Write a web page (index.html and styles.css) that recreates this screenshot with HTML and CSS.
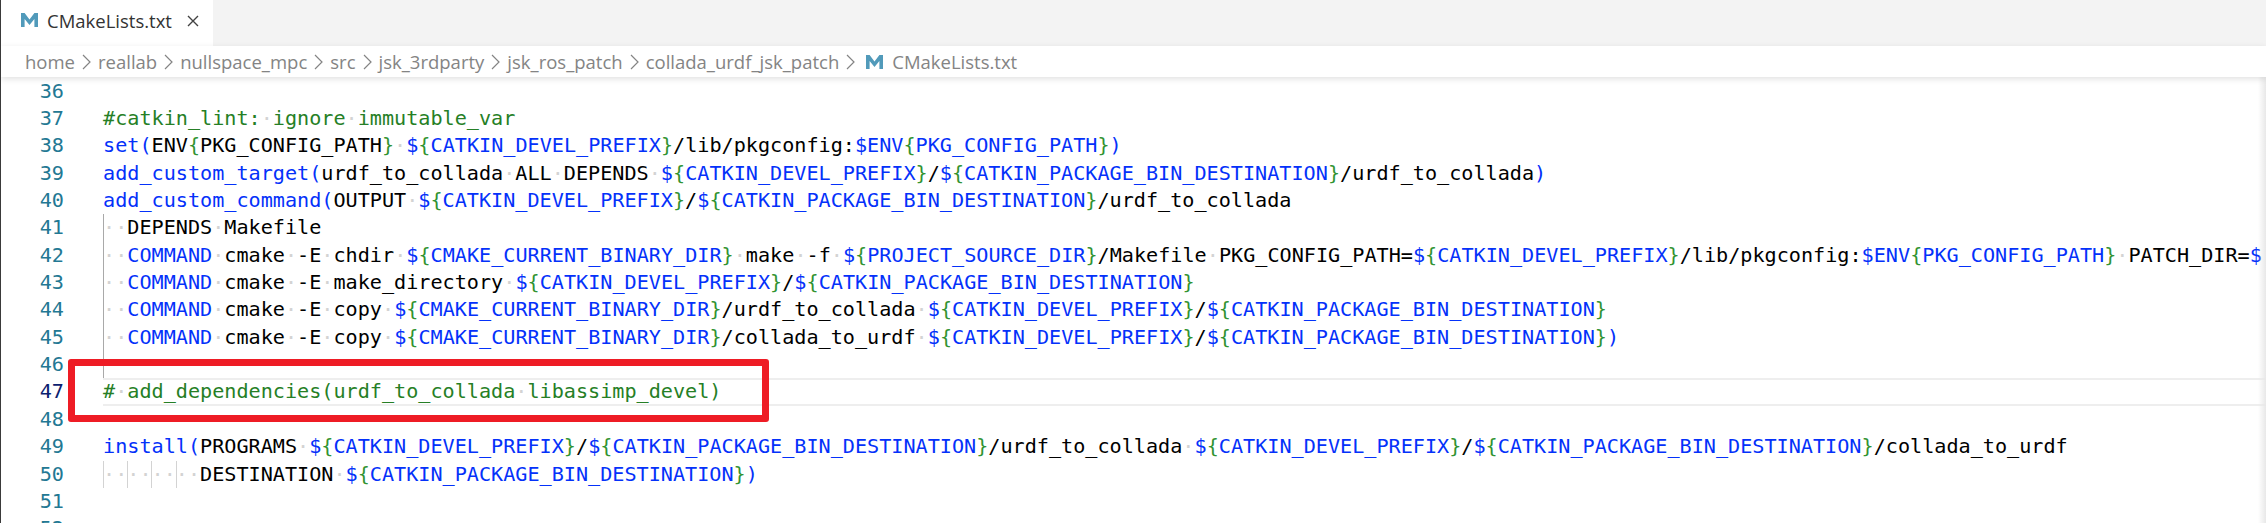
FILE: index.html
```html
<!DOCTYPE html>
<html lang="en">
<head>
<meta charset="utf-8">
<title>CMakeLists.txt</title>
<link rel="stylesheet" href="styles.css">
</head>
<body>
<div class="window">
  <div class="tabs">
    <div class="tab">
      <svg class="m-icon" viewBox="0 0 17 14"><path d="M0 14V0h3.6L8.5 6.6 13.4 0H17v14h-3.6V6L8.5 12 3.6 6V14z"/></svg>
      <span class="tab-name">CMakeLists.txt</span>
      <svg class="close" viewBox="0 0 12 12"><path d="M1 1l10 10M11 1L1 11"/></svg>
    </div>
  </div>
  <div class="crumbs">
    <span>home</span><svg class="chev" viewBox="0 0 9 16"><path d="M1 1l7 7-7 7"/></svg>
    <span>reallab</span><svg class="chev" viewBox="0 0 9 16"><path d="M1 1l7 7-7 7"/></svg>
    <span>nullspace_mpc</span><svg class="chev" viewBox="0 0 9 16"><path d="M1 1l7 7-7 7"/></svg>
    <span>src</span><svg class="chev" viewBox="0 0 9 16"><path d="M1 1l7 7-7 7"/></svg>
    <span>jsk_3rdparty</span><svg class="chev" viewBox="0 0 9 16"><path d="M1 1l7 7-7 7"/></svg>
    <span>jsk_ros_patch</span><svg class="chev" viewBox="0 0 9 16"><path d="M1 1l7 7-7 7"/></svg>
    <span>collada_urdf_jsk_patch</span><svg class="chev" viewBox="0 0 9 16"><path d="M1 1l7 7-7 7"/></svg>
    <svg class="m-icon" viewBox="0 0 17 14"><path d="M0 14V0h3.6L8.5 6.6 13.4 0H17v14h-3.6V6L8.5 12 3.6 6V14z"/></svg>
    <span>CMakeLists.txt</span>
  </div>
  <div class="editor">
    <div class="line"><span class="num">36</span><code class="code"></code></div>
    <div class="line"><span class="num">37</span><code class="code"><i class="c">#catkin_lint:<u>·</u>ignore<u>·</u>immutable_var</i></code></div>
    <div class="line"><span class="num">38</span><code class="code"><b>set(</b>ENV<s>{</s>PKG_CONFIG_PATH<s>}</s><u>·</u><b>$</b><s>{</s><b>CATKIN_DEVEL_PREFIX</b><s>}</s>/lib/pkgconfig:<b>$ENV</b><s>{</s><b>PKG_CONFIG_PATH</b><s>}</s><b>)</b></code></div>
    <div class="line"><span class="num">39</span><code class="code"><b>add_custom_target(</b>urdf_to_collada<u>·</u>ALL<u>·</u>DEPENDS<u>·</u><b>$</b><s>{</s><b>CATKIN_DEVEL_PREFIX</b><s>}</s>/<b>$</b><s>{</s><b>CATKIN_PACKAGE_BIN_DESTINATION</b><s>}</s>/urdf_to_collada<b>)</b></code></div>
    <div class="line"><span class="num">40</span><code class="code"><b>add_custom_command(</b>OUTPUT<u>·</u><b>$</b><s>{</s><b>CATKIN_DEVEL_PREFIX</b><s>}</s>/<b>$</b><s>{</s><b>CATKIN_PACKAGE_BIN_DESTINATION</b><s>}</s>/urdf_to_collada</code></div>
    <div class="line"><span class="num">41</span><code class="code guide"><u>··</u>DEPENDS<u>·</u>Makefile</code></div>
    <div class="line"><span class="num">42</span><code class="code guide"><u>··</u><b>COMMAND</b><u>·</u>cmake<u>·</u>-E<u>·</u>chdir<u>·</u><b>$</b><s>{</s><b>CMAKE_CURRENT_BINARY_DIR</b><s>}</s><u>·</u>make<u>·</u>-f<u>·</u><b>$</b><s>{</s><b>PROJECT_SOURCE_DIR</b><s>}</s>/Makefile<u>·</u>PKG_CONFIG_PATH=<b>$</b><s>{</s><b>CATKIN_DEVEL_PREFIX</b><s>}</s>/lib/pkgconfig:<b>$ENV</b><s>{</s><b>PKG_CONFIG_PATH</b><s>}</s><u>·</u>PATCH_DIR=<b>$</b></code></div>
    <div class="line"><span class="num">43</span><code class="code guide"><u>··</u><b>COMMAND</b><u>·</u>cmake<u>·</u>-E<u>·</u>make_directory<u>·</u><b>$</b><s>{</s><b>CATKIN_DEVEL_PREFIX</b><s>}</s>/<b>$</b><s>{</s><b>CATKIN_PACKAGE_BIN_DESTINATION</b><s>}</s></code></div>
    <div class="line"><span class="num">44</span><code class="code guide"><u>··</u><b>COMMAND</b><u>·</u>cmake<u>·</u>-E<u>·</u>copy<u>·</u><b>$</b><s>{</s><b>CMAKE_CURRENT_BINARY_DIR</b><s>}</s>/urdf_to_collada<u>·</u><b>$</b><s>{</s><b>CATKIN_DEVEL_PREFIX</b><s>}</s>/<b>$</b><s>{</s><b>CATKIN_PACKAGE_BIN_DESTINATION</b><s>}</s></code></div>
    <div class="line"><span class="num">45</span><code class="code guide"><u>··</u><b>COMMAND</b><u>·</u>cmake<u>·</u>-E<u>·</u>copy<u>·</u><b>$</b><s>{</s><b>CMAKE_CURRENT_BINARY_DIR</b><s>}</s>/collada_to_urdf<u>·</u><b>$</b><s>{</s><b>CATKIN_DEVEL_PREFIX</b><s>}</s>/<b>$</b><s>{</s><b>CATKIN_PACKAGE_BIN_DESTINATION</b><s>}</s><b>)</b></code></div>
    <div class="line"><span class="num">46</span><code class="code guide"></code></div>
    <div class="line current"><span class="num">47</span><code class="code"><i class="c">#<u>·</u>add_dependencies(urdf_to_collada<u>·</u>libassimp_devel)</i></code></div>
    <div class="line"><span class="num">48</span><code class="code"></code></div>
    <div class="line"><span class="num">49</span><code class="code"><b>install(</b>PROGRAMS<u>·</u><b>$</b><s>{</s><b>CATKIN_DEVEL_PREFIX</b><s>}</s>/<b>$</b><s>{</s><b>CATKIN_PACKAGE_BIN_DESTINATION</b><s>}</s>/urdf_to_collada<u>·</u><b>$</b><s>{</s><b>CATKIN_DEVEL_PREFIX</b><s>}</s>/<b>$</b><s>{</s><b>CATKIN_PACKAGE_BIN_DESTINATION</b><s>}</s>/collada_to_urdf</code></div>
    <div class="line"><span class="num">50</span><code class="code guides4"><u>········</u>DESTINATION<u>·</u><b>$</b><s>{</s><b>CATKIN_PACKAGE_BIN_DESTINATION</b><s>}</s><b>)</b></code></div>
    <div class="line"><span class="num">51</span><code class="code"></code></div>
    <div class="line"><span class="num">52</span><code class="code"></code></div>
    <div class="highlight-box"></div>
  </div>
</div>
</body>
</html>
```
FILE: styles.css
```css
* { box-sizing: border-box; }
html, body { margin: 0; height: 100%; background: #fff; overflow: hidden; }
.window {
  width: 2266px; height: 523px; overflow: hidden;
  border-left: 1px solid #3a3a3a;
  display: flex; flex-direction: column;
  font-family: "Open Sans", "Noto Sans", sans-serif;
}
.tabs { height: 46px; background: #f3f3f3; display: flex; flex: none; }
.tab {
  width: 212px; background: #fff; display: flex; align-items: center;
  padding: 0 0 6px 20px;
}
.m-icon { width: 17px; height: 14px; fill: #519aba; flex: none; }
.tab-name { font-size: 18.5px; color: #333; margin-left: 9px; width: 131px; white-space: nowrap; }
.close { width: 12px; height: 12px; margin: 2px 0 0 9px; fill: none; stroke: #424242; stroke-width: 1.4; }
.crumbs {
  height: 31px; flex: none; display: flex; align-items: center; gap: 7px;
  padding-left: 24px; font-size: 18.5px; color: #848484; background: #fff;
  white-space: nowrap;
  position: relative; z-index: 2;
  box-shadow: 0 2px 6px rgba(0,0,0,.12);
}
.chev { width: 9px; height: 16px; fill: none; stroke: #848484; stroke-width: 1.2; flex: none; }
.crumbs .m-icon { margin: 0 2px 0 4px; }
.editor {
  position: relative; flex: 1; overflow: hidden; padding-top: 0.5px;
  font-family: "DejaVu Sans Mono", monospace;
  font-size: 20.15px;
}
.editor::after {
  content: ""; position: absolute; top: 0; right: 0; bottom: 0; width: 8px;
  background: linear-gradient(to right, rgba(232,232,232,0), #e8e8e8);
}
.line { display: flex; height: 27.36px; line-height: 27.36px; color: #000; white-space: pre; }
.num { width: 63px; text-align: right; color: #237893; flex: none; }
.code { font: inherit; margin-left: 39px; flex: 1; position: relative; }
.code b { font-weight: normal; color: #0431fa; }
.code s { text-decoration: none; color: #319331; }
.code u { text-decoration: none; color: #d3d3d3; }
.code .c { font-style: normal; color: #267f26; }
.code .c u { color: #d3d3d3; }
.guide { box-shadow: inset 1px 0 0 #a9a9a9; }
.guides4 {
  background-image: linear-gradient(#d3d3d3, #d3d3d3), linear-gradient(#d3d3d3, #d3d3d3), linear-gradient(#d3d3d3, #d3d3d3), linear-gradient(#d3d3d3, #d3d3d3);
  background-size: 1px 100%;
  background-repeat: no-repeat;
  background-position: 0 0, 24.2px 0, 48.4px 0, 72.6px 0;
}
.current .num { color: #0b216f; }
.current .code { box-shadow: inset 0 2px 0 #eee, inset 0 -2px 0 #eee; }
.highlight-box {
  position: absolute; left: 67px; top: 282px; width: 701px; height: 63px;
  border: 7px solid #ee1c25; border-radius: 3px;
}
```
